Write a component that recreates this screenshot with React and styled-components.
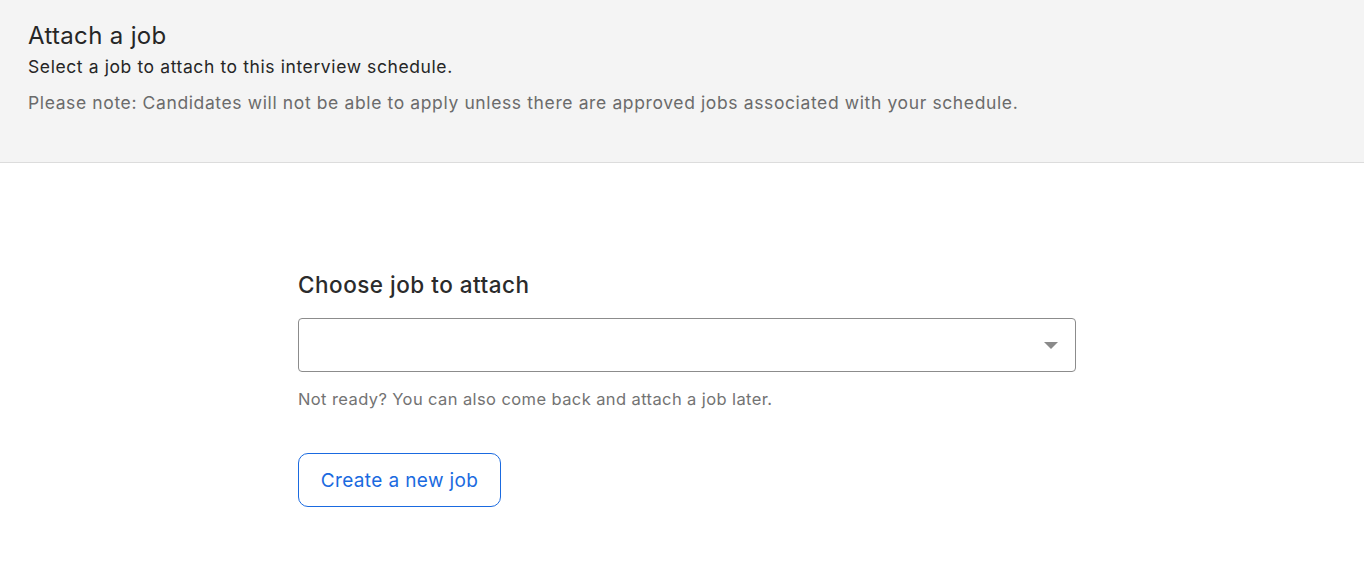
import React from "react";
import styled, { createGlobalStyle } from "styled-components";

const Global = createGlobalStyle`
  html, body { margin: 0; padding: 0; background: #fff; }
  body { font-family: Inter, "Noto Sans", sans-serif; color: #222; }
  * { box-sizing: border-box; }
`;

const Header = styled.header`
  background: #f4f4f4;
  border-bottom: 1px solid #dcdcdc;
  height: 163px;
  padding: 20px 28px 0;
`;

const Title = styled.h1`
  margin: 0;
  font-size: 24px;
  font-weight: 400;
  line-height: 32px;
  letter-spacing: 0.33px;
  color: #262626;
`;

const Subtitle = styled.p`
  margin: 3px 0 0;
  font-size: 17.5px;
  line-height: 24px;
  letter-spacing: 0.6px;
  color: #262626;
`;

const Note = styled.p`
  margin: 12px 0 0;
  font-size: 17.5px;
  line-height: 24px;
  letter-spacing: 0.62px;
  color: #6b6b6b;
`;

const Main = styled.main`
  padding: 106px 0 0 298px;
`;

const Column = styled.div`
  width: 778px;
  display: flex;
  flex-direction: column;
  align-items: flex-start;
`;

const Heading = styled.h2`
  margin: 0;
  font-size: 22.5px;
  font-weight: 500;
  line-height: 32px;
  letter-spacing: 0.5px;
  color: #2b2b2b;
`;

const Select = styled.div`
  margin-top: 17px;
  width: 100%;
  height: 54px;
  border: 1px solid #8c8c8c;
  border-radius: 4px;
  display: flex;
  align-items: center;
  justify-content: flex-end;
  padding-right: 17px;
  background: #fff;
`;

const Caret = styled.span`
  width: 0;
  height: 0;
  border-left: 7px solid transparent;
  border-right: 7px solid transparent;
  border-top: 7px solid #8a8a8a;
`;

const Helper = styled.p`
  margin: 15px 0 0;
  font-size: 16.5px;
  line-height: 24px;
  letter-spacing: 0.4px;
  color: #737373;
`;

const Button = styled.button`
  margin-top: 42px;
  height: 54px;
  width: 203px;
  padding: 0;
  border: 1px solid #1a6ae0;
  border-radius: 10px;
  background: #fff;
  color: #1a6ae0;
  font-family: Inter, "Noto Sans", sans-serif;
  font-size: 19px;
  letter-spacing: 0.37px;
  cursor: pointer;
`;

export default function App() {
  return (
    <>
      <Global />
      <Header>
        <Title>Attach a job</Title>
        <Subtitle>Select a job to attach to this interview schedule.</Subtitle>
        <Note>
          Please note: Candidates will not be able to apply unless there are approved jobs associated with your schedule.
        </Note>
      </Header>
      <Main>
        <Column>
          <Heading>Choose job to attach</Heading>
          <Select>
            <Caret />
          </Select>
          <Helper>Not ready? You can also come back and attach a job later.</Helper>
          <Button>Create a new job</Button>
        </Column>
      </Main>
    </>
  );
}
